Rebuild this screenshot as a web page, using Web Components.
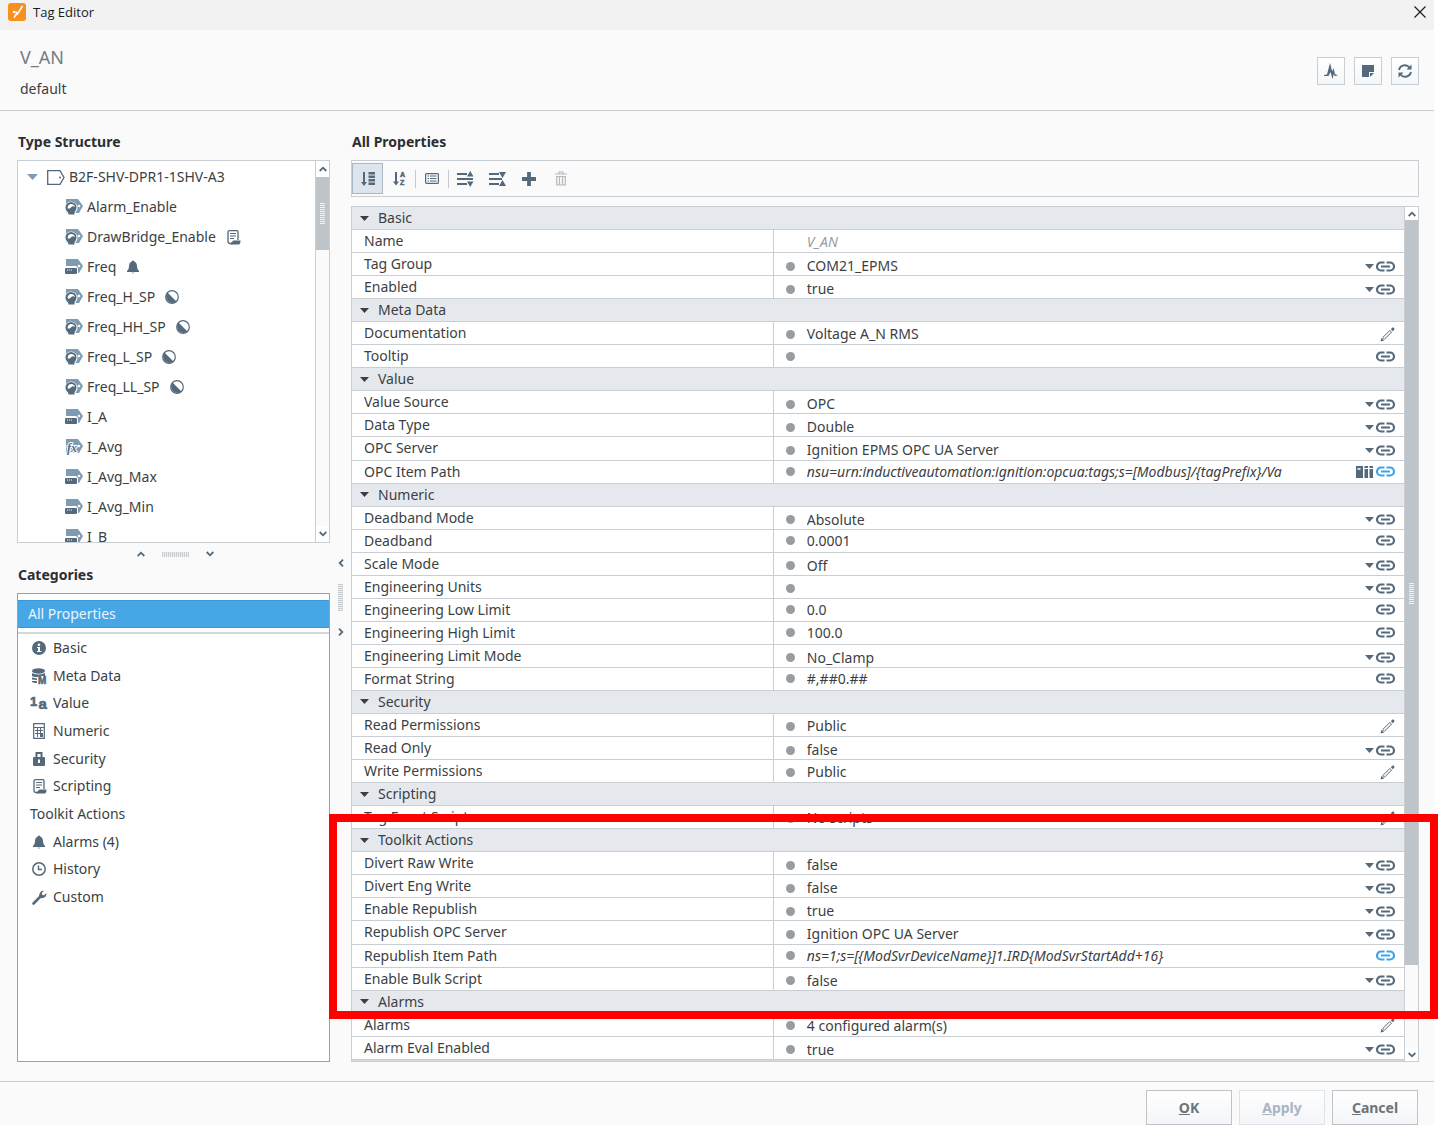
<!DOCTYPE html>
<html lang="en">
<head>
    <meta charset="UTF-8">
    <meta name="viewport" content="width=device-width, initial-scale=1.0">
    <title>Tag Editor</title>
    <style>
        body {
            margin: 0;
            background-color: #fff;
            font-family: "Noto Sans", "Open Sans", sans-serif;
            font-size: 14px;
            line-height: 20px;
            color: #3b3f44;
            --line: #c9ced4;
            --ink: #54697b;
            --accent: #47a6e6;
        }
    </style>
</head>
<body>

    <tag-editor>
        <span slot="title">Tag Editor</span>
        <span slot="name">V_AN</span>
        <span slot="provider">default</span>

        <side-panel slot="side">
            <span slot="tree-title">Type Structure</span>
            <tree-item slot="tree" icon="tagOutline" root>B2F-SHV-DPR1-1SHV-A3</tree-item>
            <tree-item slot="tree" icon="tagMemory">Alarm_Enable</tree-item>
            <tree-item slot="tree" icon="tagMemory" badge="script">DrawBridge_Enable</tree-item>
            <tree-item slot="tree" icon="tagOpc" badge="bell">Freq</tree-item>
            <tree-item slot="tree" icon="tagMemory" badge="half">Freq_H_SP</tree-item>
            <tree-item slot="tree" icon="tagMemory" badge="half">Freq_HH_SP</tree-item>
            <tree-item slot="tree" icon="tagMemory" badge="half">Freq_L_SP</tree-item>
            <tree-item slot="tree" icon="tagMemory" badge="half">Freq_LL_SP</tree-item>
            <tree-item slot="tree" icon="tagOpc">I_A</tree-item>
            <tree-item slot="tree" icon="tagExpr">I_Avg</tree-item>
            <tree-item slot="tree" icon="tagOpc">I_Avg_Max</tree-item>
            <tree-item slot="tree" icon="tagOpc">I_Avg_Min</tree-item>
            <tree-item slot="tree" icon="tagOpc">I_B</tree-item>

            <span slot="category-title">Categories</span>
            <category-item slot="all" selected>All Properties</category-item>
            <category-item slot="category" icon="info">Basic</category-item>
            <category-item slot="category" icon="meta">Meta Data</category-item>
            <category-item slot="category" icon="value">Value</category-item>
            <category-item slot="category" icon="calc">Numeric</category-item>
            <category-item slot="category" icon="lock">Security</category-item>
            <category-item slot="category" icon="script">Scripting</category-item>
            <category-item slot="category">Toolkit Actions</category-item>
            <category-item slot="category" icon="bell">Alarms (4)</category-item>
            <category-item slot="category" icon="clock">History</category-item>
            <category-item slot="category" icon="wrench">Custom</category-item>
        </side-panel>

        <span slot="main-title">All Properties</span>
        <property-toolbar slot="main"></property-toolbar>
        <property-table slot="main"></property-table>
    </tag-editor>

    <template id="tag-editor-template">
        <style>
            :host {
                display: grid;
                grid-template-rows: 30px 81px minmax(0, 1fr) auto;
                position: relative;
                height: 100vh;
                box-sizing: border-box;
                border-right: 4px solid #fff;
                background: #fafafa;
            }
            .titlebar {
                display: flex;
                align-items: flex-start;
                gap: 7px;
                padding: 3px 8px;
                background: #f2f2f2;
                font-family: "Open Sans", sans-serif;
                font-size: 13px;
                line-height: 18px;
                color: #1b1b1b;
            }
            .titlebar button {
                margin-left: auto;
                padding: 3px 0;
                border: 0;
                background: none;
                line-height: 0;
                color: #222;
            }
            header {
                display: flex;
                justify-content: space-between;
                align-items: flex-start;
                padding: 15px 15px 0 20px;
                border-bottom: 1px solid var(--line);
            }
            h1 {
                margin: 0 0 12px;
                font-size: 18px;
                font-weight: normal;
                line-height: 24px;
                color: #777c82;
            }
            .provider {
                line-height: 16px;
            }
            .actions {
                display: flex;
                gap: 9px;
                padding-top: 12px;
            }
            .actions button {
                display: grid;
                place-items: center;
                width: 28px;
                height: 28px;
                padding: 0;
                border: 1px solid var(--line);
                background: linear-gradient(#fff, #f3f6f9);
                color: var(--ink);
            }
            .body {
                display: grid;
                grid-template-columns: 313px 21px minmax(0, 1fr);
                padding: 21px 15px 19px 17px;
            }
            .main {
                display: flex;
                flex-direction: column;
            }
            h2 {
                margin: 0 0 8px;
                padding-left: 1px;
                font-size: 14px;
                line-height: 20px;
                color: #2b2e33;
            }
            .splitter {
                display: flex;
                flex-direction: column;
                align-items: center;
                justify-content: center;
                gap: 17px;
                color: var(--ink);
            }
            .grip {
                width: 5px;
                height: 27px;
                background: repeating-linear-gradient(#c8cdd2 0 1px, #eceef0 1px 2px);
            }
            footer {
                display: flex;
                justify-content: flex-end;
                gap: 7px;
                padding: 8px 16px 0;
                border-top: 1px solid var(--line);
            }
            footer button {
                width: 86px;
                height: 35px;
                border: 1px solid #bfc3c8;
                background: linear-gradient(#fff, #f3f5f8);
                font: inherit;
                font-weight: bold;
                color: #6d737a;
            }
            footer button:disabled {
                border-color: #dfe3e8;
                color: #a9b5c3;
            }
            /* red frame round the toolkit rows */
            .highlight {
                position: absolute;
                top: 814px;
                left: 329px;
                right: -4px;
                height: 205px;
                box-sizing: border-box;
                border: 8px solid #f00;
                pointer-events: none;
            }
        </style>
        <div class="titlebar">
            <ui-icon name="logo"></ui-icon>
            <slot name="title"></slot>
            <button aria-label="Close"><ui-icon name="close"></ui-icon></button>
        </div>
        <header>
            <div>
                <h1><slot name="name"></slot></h1>
                <div class="provider"><slot name="provider"></slot></div>
            </div>
            <div class="actions">
                <button aria-label="Diagnostics"><ui-icon name="pulse"></ui-icon></button>
                <button aria-label="Notes"><ui-icon name="note"></ui-icon></button>
                <button aria-label="Refresh"><ui-icon name="refresh"></ui-icon></button>
            </div>
        </header>
        <div class="body">
            <slot name="side"></slot>
            <div class="splitter">
                <ui-icon name="left"></ui-icon>
                <div class="grip"></div>
                <ui-icon name="right"></ui-icon>
            </div>
            <div class="main">
                <h2><slot name="main-title"></slot></h2>
                <slot name="main"></slot>
            </div>
        </div>
        <footer>
            <button><u>O</u>K</button>
            <button disabled><u>A</u>pply</button>
            <button><u>C</u>ancel</button>
        </footer>
        <div class="highlight"></div>
    </template>

    <template id="side-panel-template">
        <style>
            :host {
                display: flex;
                flex-direction: column;
                min-height: 0;
            }
            h2 {
                margin: 0 0 8px;
                padding-left: 1px;
                font-size: 14px;
                line-height: 20px;
                color: #2b2e33;
            }
            .tree {
                display: flex;
                flex: 381 1 0;
                min-height: 0;
                box-sizing: border-box;
                border: 1px solid var(--line);
                background: #fff;
            }
            .items {
                flex: 1;
                padding-top: 1px;
                overflow: hidden;
            }
            .splitter {
                display: flex;
                align-items: center;
                justify-content: center;
                gap: 17px;
                height: 22px;
                padding-left: 4px;
                color: var(--ink);
            }
            .grip {
                width: 27px;
                height: 5px;
                background: repeating-linear-gradient(90deg, #c8cdd2 0 1px, #eceef0 1px 2px);
            }
            .categories {
                flex: 461 1 0;
                box-sizing: border-box;
                padding-top: 6px;
                border: 1px solid #5db3ec;
                background: #fff;
            }
            .list {
                display: grid;
                grid-auto-rows: 1fr;
                height: 277px;
                margin-top: 4px;
                border-top: 2px solid #d3d7db;
            }
        </style>
        <h2><slot name="tree-title"></slot></h2>
        <div class="tree">
            <div class="items"><slot name="tree"></slot></div>
            <scroll-bar style="--arrow: 16px; --thumb: 21%; --grip-top: 26px"></scroll-bar>
        </div>
        <div class="splitter">
            <ui-icon name="up"></ui-icon>
            <div class="grip"></div>
            <ui-icon name="down"></ui-icon>
        </div>
        <h2><slot name="category-title"></slot></h2>
        <div class="categories">
            <slot name="all"></slot>
            <div class="list"><slot name="category"></slot></div>
        </div>
    </template>

    <template id="tree-item-template">
        <style>
            :host {
                display: flex;
                align-items: center;
                gap: 4px;
                height: 30px;
                padding-left: 47px;
                white-space: nowrap;
            }
            :host([root]) {
                padding-left: 9px;
            }
            .caret {
                margin-right: 5px;
                color: #7f9cb4;
            }
            .badge {
                margin-left: 6px;
            }
            ui-icon {
                color: var(--ink);
            }
        </style>
        <slot></slot>
    </template>

    <template id="category-item-template">
        <style>
            :host {
                display: block;
            }
            button {
                display: flex;
                align-items: center;
                gap: 5px;
                width: 100%;
                height: 100%;
                padding: 0 0 0 12px;
                border: 0;
                background: none;
                font: inherit;
                color: inherit;
                text-align: left;
            }
            :host([selected]) button {
                height: 28px;
                padding-left: 10px;
                border: solid #3a98d8;
                border-width: 1px 0;
                background: var(--accent);
                color: #eaf5fd;
            }
            .icon {
                display: grid;
                justify-items: center;
                width: 18px;
                color: var(--ink);
            }
        </style>
        <button><slot></slot></button>
    </template>

    <template id="scroll-bar-template">
        <style>
            :host {
                display: flex;
                flex-direction: column;
                width: 13px;
                flex: none;
                border-left: 1px solid var(--line);
                background: #fafafa;
            }
            button {
                display: grid;
                place-items: center;
                width: 100%;
                height: var(--arrow);
                padding: 0;
                border: 0;
                background: #fff;
                color: var(--ink);
            }
            .track {
                flex: 1;
                min-height: 0;
            }
            .thumb {
                height: var(--thumb);
                box-sizing: border-box;
                padding: var(--grip-top) 4px 0;
                background: #bec4c8;
            }
            .grip {
                height: 21px;
                background: repeating-linear-gradient(#f1f3f4 0 1px, #bec4c8 1px 2px);
            }
        </style>
        <button aria-label="Scroll up"><ui-icon name="up"></ui-icon></button>
        <div class="track"><div class="thumb"><div class="grip"></div></div></div>
        <button aria-label="Scroll down"><ui-icon name="down"></ui-icon></button>
    </template>

    <template id="property-toolbar-template">
        <style>
            :host {
                display: flex;
                align-items: center;
                height: 35px;
                margin-bottom: 9px;
                border: 1px solid var(--line);
            }
            button {
                display: grid;
                place-items: center;
                width: 32px;
                height: 31px;
                padding: 0;
                border: 0;
                background: none;
                color: var(--ink);
            }
            button[aria-pressed="true"] {
                width: 31px;
                border: 1px solid #a9b8c5;
                background: #dde4eb;
            }
            button:disabled {
                color: #b3b9bf;
            }
            i {
                width: 1px;
                height: 18px;
                background: #c3c9ce;
            }
        </style>
        <button aria-label="Group by category" aria-pressed="true"><ui-icon name="sortList"></ui-icon></button>
        <button aria-label="Sort by name"><ui-icon name="sortAz"></ui-icon></button>
        <i></i>
        <button aria-label="Show description"><ui-icon name="details"></ui-icon></button>
        <i></i>
        <button aria-label="Expand all"><ui-icon name="expand"></ui-icon></button>
        <button aria-label="Collapse all"><ui-icon name="collapse"></ui-icon></button>
        <button aria-label="Add property"><ui-icon name="plus"></ui-icon></button>
        <button aria-label="Delete property" disabled><ui-icon name="trash"></ui-icon></button>
    </template>

    <template id="property-table-template">
        <style>
            :host {
                display: flex;
                flex: 1;
                min-height: 0;
                border: 1px solid var(--line);
                background: #d6dade;
            }
            .wrap {
                flex: 1;
                display: grid;
                padding-bottom: 1px;
            }
            table {
                width: 100%;
                height: 100%;
                table-layout: fixed;
                border-spacing: 0;
                background: #fff;
            }
            .name-column {
                width: 40%;
            }
            tr {
                height: 23px;
            }
            td, th {
                padding: 0;
                border-bottom: 1px solid var(--line);
                font-weight: normal;
                text-align: left;
                line-height: 20px;
                vertical-align: top;
            }
            .name {
                padding: 1px 0 0 12px;
            }
            .group {
                padding: 1px 0 0 8px;
                background: #e5e9ee;
            }
            .group button {
                display: flex;
                align-items: center;
                gap: 9px;
                padding: 0;
                border: 0;
                background: none;
                font: inherit;
                line-height: 20px;
                color: inherit;
            }
            .value {
                border-left: 1px solid var(--line);
            }
            .cell {
                display: flex;
                align-items: center;
                height: 22px;
                padding: 0 9px 0 12px;
            }
            .cell.edit, .cell.fixed {
                height: 20px;
                padding-top: 2px;
            }
            .cell.choice {
                height: 18px;
                padding-top: 4px;
            }
            .cell::before {
                content: "";
                flex: none;
                width: 9px;
                height: 9px;
                margin-right: 12px;
                border-radius: 50%;
                background: #989da1;
            }
            .cell.fixed::before {
                background: none;
            }
            .cell > span, input, select {
                flex: 1;
                min-width: 0;
                height: 20px;
                padding: 0;
                border: 0;
                background: none;
                font: inherit;
                line-height: 20px;
                color: inherit;
                appearance: none;
                outline: 0;
            }
            .italic > span, .italic input {
                font-style: italic;
            }
            .fixed input {
                color: #999da1;
            }
            .caret {
                margin-right: 2px;
            }
            .cell ui-icon {
                color: var(--ink);
            }
            .cell button {
                padding: 0;
                border: 0;
                background: none;
                line-height: 0;
            }
            .browse {
                margin-right: 3px;
            }
            .bound button ui-icon {
                color: #3ba3ea;
            }
        </style>
        <div class="wrap">
            <table>
                <colgroup><col class="name-column"><col></colgroup>
                <tbody></tbody>
            </table>
        </div>
        <scroll-bar style="--arrow: 13px; --thumb: 90%; --grip-top: 363px"></scroll-bar>
    </template>

    <script>
        // [width, height, svg body]; every icon paints with currentColor
        const TAG = '<path d="M1 0H13L18 7L14 14H1Z" fill="#7f9ab1"/><circle cx="14" cy="7" r="1.3" fill="#fff"/>';
        const ICONS = {
            logo: [18, 18, '<rect width="18" height="18" rx="3" fill="#f7901e"/><path d="M14.5 3L9.5 11L7.500 8.500" fill="none" stroke="#fff" stroke-width="1.5"/><circle cx="6" cy="9" r="1.2" fill="#fff"/><path d="M9.5 10.5L6 15L7.5 11Z" fill="#fff" stroke="#fff"/>'],
            close: [12, 12, '<path d="M.5 .5L11.5 11.5M11.5 .5L.5 11.5" stroke="currentColor" stroke-width="1.3"/>'],
            pulse: [14, 16, '<path d="M0 12L3 11.500L6 0L8.200 8.500L9.500 5L11 11L14 12.500L10.500 13L10 10.500L8.500 16L6.500 9L4.500 13H0Z" fill="currentColor"/>'],
            note: [12, 12, '<path d="M0 0H12V7H7V12H0Z" fill="currentColor"/><path d="M8 8H12L8 12Z" fill="currentColor"/>'],
            refresh: [14, 14, '<path d="M1 6A6 6 0 0 1 11.500 3.500M13 8A6 6 0 0 1 2.500 10.500" fill="none" stroke="currentColor" stroke-width="1.8"/><path d="M13.500 .5V5.500H8.500ZM.5 13.500V8.500H5.500Z" fill="currentColor"/>'],
            up: [8, 6, '<path d="M.7 5L4 1.700L7.300 5" fill="none" stroke="currentColor" stroke-width="1.8"/>'],
            down: [8, 6, '<path d="M.7 1L4 4.300L7.300 1" fill="none" stroke="currentColor" stroke-width="1.8"/>'],
            left: [6, 8, '<path d="M5 .7L1.700 4L5 7.300" fill="none" stroke="currentColor" stroke-width="1.8"/>'],
            right: [6, 8, '<path d="M1 .7L4.300 4L1 7.300" fill="none" stroke="currentColor" stroke-width="1.8"/>'],
            treeCaret: [11, 6, '<path d="M0 0H11L5.500 6Z" fill="currentColor"/>'],
            caret: [9, 5, '<path d="M0 0H9L4.500 5Z" fill="currentColor"/>'],
            tagOutline: [18, 15, '<path d="M.7 .7H13L17 7.500L13 14.300H.7Z" fill="#fff" stroke="currentColor" stroke-width="1.3"/><circle cx="13" cy="7.5" r="1" fill="currentColor"/>'],
            tagMemory: [18, 16, TAG + '<circle cx="6" cy="9" r="6.5" fill="#fff"/><circle cx="6" cy="8.500" r="5.500" fill="currentColor"/><path d="M2.500 11H9.500V15.500H3.500Z" fill="currentColor"/><path d="M2.500 9Q3 4.500 7 5Q9.500 5.500 10 8Q7.500 6.500 6 8.500Q4 10.500 2.500 9Z" fill="#fff"/>'],
            tagOpc: [18, 16, TAG + '<path d="M0 7H11L13 9V15H0Z" fill="#fff"/><rect y="9" width="12" height="6" rx="1" fill="currentColor"/><path d="M2 11H3M4 11H5M6 11H7" stroke="#fff"/>'],
            tagExpr: [18, 16, TAG + '<text x="2" y="13" font-family="Liberation Serif" font-style="italic" font-weight="bold" font-size="12" fill="currentColor" stroke="#fff" stroke-width="2" paint-order="stroke">fx</text>'],
            script: [15, 15, '<path d="M2 11V2Q2 .7 3.500 .7H11Q12 .7 12 2V10M2 11Q2 13.500 4 13.500H7" fill="none" stroke="currentColor" stroke-width="1.3"/><path d="M4 3.500H10M4 6H10M4 8.500H8" stroke="currentColor" stroke-width="1.2"/><path d="M5.500 12Q6 13 7 10.500H14.500Q14.500 14.500 12.500 14.500H4.500Z" fill="currentColor"/>'],
            bell: [14, 14, '<path d="M7 .5Q8 .5 8.200 1.500Q11 2.500 11 6.500Q11 9.500 13 11V12H1V11Q3 9.500 3 6.500Q3 2.500 5.800 1.500Q6 .5 7 .5Z" fill="currentColor"/><path d="M5.500 12.500H8.500L7 14Z" fill="currentColor" opacity=".6"/>'],
            half: [14, 14, '<circle cx="7" cy="7" r="6.3" fill="#fff" stroke="currentColor" stroke-width="1.2"/><path d="M2.500 2.500L11.500 11.500A6.400 6.400 0 0 1 2.500 2.500Z" fill="currentColor"/>'],
            info: [14, 14, '<circle cx="7" cy="7" r="7" fill="currentColor"/><path d="M5 6H8V10H9.500V11H5V10H6V7H5Z" fill="#fff"/><circle cx="7" cy="3.7" r="1.3" fill="#fff"/>'],
            meta: [16, 16, '<ellipse cx="7.500" cy="3" rx="6.500" ry="2.700" fill="currentColor"/><path d="M1 5Q7 8 14 5V8H7V9H5Q2 9 1 8ZM1 9.500L6 10.500V12L1 11.500ZM1 13H6V15Q2 15 1 14Z" fill="currentColor"/><text x="7" y="15.5" font-family="Liberation Sans" font-size="10" font-weight="bold" fill="currentColor" stroke="currentColor" stroke-width=".6">M</text>'],
            value: [18, 16, '<g font-family="Liberation Sans" font-weight="bold" fill="currentColor" stroke="currentColor" stroke-width=".6"><text x="0" y="11" font-size="13">1</text><text x="8.5" y="14" font-size="15">a</text></g>'],
            calc: [12, 16, '<path d="M.7 .7H11.300V15.300H.7ZM1 4.500H11" fill="none" stroke="currentColor" stroke-width="1.2"/><path d="M2 7.500H10M2 10.500H10M4.500 5V14M7.500 5V14" stroke="currentColor"/><path d="M8 11H10V14H8Z" fill="currentColor"/>'],
            lock: [12, 14, '<path d="M3.500 6V1H8.500V6" fill="none" stroke="currentColor" stroke-width="2"/><rect y="5" width="12" height="9" rx="1" fill="currentColor"/><path d="M5 7.500H7V11H5Z" fill="#fff"/>'],
            clock: [14, 14, '<circle cx="7" cy="7" r="6.2" fill="none" stroke="currentColor" stroke-width="1.5"/><path d="M6.500 3.500V7.500H10" fill="none" stroke="currentColor" stroke-width="1.4"/>'],
            wrench: [15, 15, '<path d="M1.500 13.500L8.500 6.500" stroke="currentColor" stroke-width="2.6" stroke-linecap="round"/><path d="M12 .8L9.800 3L10.300 5L12.200 5.300L14.200 3Q15 7 11 8Q9 8.500 7.500 7Q6.500 4.500 8.500 2Q10 .2 12 .8Z" fill="currentColor"/>'],
            sortList: [14, 14, '<path d="M3 0V11" stroke="currentColor" stroke-width="2"/><path d="M0 10H6L3 14ZM7.500 0H14V2.500H7.500ZM7.500 3.500H14V6H7.500ZM7.500 7H14V9.500H7.500ZM7.500 10.500H14V13H7.500Z" fill="currentColor"/>'],
            sortAz: [12, 15, '<path d="M3 1V12" stroke="currentColor" stroke-width="2"/><path d="M0 10.500H6L3 14.500Z" fill="currentColor"/><g font-family="Liberation Sans" font-size="7" font-weight="bold" fill="currentColor" stroke="currentColor" stroke-width=".5"><text x="7" y="6">A</text><text x="7" y="14">Z</text></g>'],
            details: [14, 11, '<rect x=".6" y=".6" width="12.8" height="9.8" rx="1" fill="none" stroke="currentColor" stroke-width="1.2"/><path d="M2.500 3H4M5 3H11.500M2.500 5.500H4M5 5.500H11.500M2.500 8H4M5 8H11.500" stroke="currentColor" stroke-width="1.1"/>'],
            expand: [17, 16, '<path d="M0 3H10M0 8H16M0 13H10" stroke="currentColor" stroke-width="2.2"/><path d="M10 5.500H16.500L13.200 0ZM10 10.500H16.500L13.200 16Z" fill="currentColor"/>'],
            collapse: [17, 14, '<path d="M0 2H10M0 7H13M0 12H10" stroke="currentColor" stroke-width="2.2"/><path d="M10 0H17L13.500 6ZM10 14H17L13.500 8Z" fill="currentColor"/>'],
            plus: [14, 14, '<path d="M7 0V14M0 7H14" stroke="currentColor" stroke-width="3.8"/>'],
            trash: [12, 15, '<path d="M0 3H12M4 2.500V1H8V2.500M1 5.500H11M1.700 6V14H10.300V6M4.500 6V14M7.500 6V14" fill="none" stroke="currentColor" stroke-width="1.2"/>'],
            link: [19, 11, '<path d="M8.500 1.500H5A4 4 0 0 0 5 9.500H8.500M10.500 1.500H14A4 4 0 0 1 14 9.500H10.500" fill="none" stroke="currentColor" stroke-width="2.2"/><path d="M5 5.500H14" stroke="currentColor" stroke-width="2"/>'],
            pencil: [15, 15, '<path d="M.5 14.500L1.500 10.800L4.200 13.500ZM10.800 2.200L12.500 .6Q14.800 .2 14.400 2.500L12.800 4.200Z" fill="currentColor"/><path d="M2.800 10.500L9.800 3.500L11.500 5.200L4.500 12.200Z" fill="none" stroke="currentColor"/>'],
            browse: [17, 12, '<path d="M0 0H7V12H0ZM8.500 0H12V2H8.500ZM8.500 3H12V12H8.500ZM13.500 0H17V2H13.500ZM13.500 3H17V12H13.500Z" fill="currentColor"/><path d="M1.500 3H4.500" stroke="#fff" stroke-width="1.5"/>']
        };

        // kind: choice = drop-down, text = text box, edit = opens its own editor
        const PROPERTIES = [
            ['Basic'],
            ['Name', 'V_AN', 'fixed italic'],
            ['Tag Group', 'COM21_EPMS', 'choice'],
            ['Enabled', 'true', 'choice'],
            ['Meta Data'],
            ['Documentation', 'Voltage A_N RMS', 'edit'],
            ['Tooltip', '', 'text'],
            ['Value'],
            ['Value Source', 'OPC', 'choice'],
            ['Data Type', 'Double', 'choice'],
            ['OPC Server', 'Ignition EPMS OPC UA Server', 'choice'],
            ['OPC Item Path', 'nsu=urn:inductiveautomation:ignition:opcua:tags;s=[Modbus]/{tagPrefix}/Va', 'text italic bound browsable'],
            ['Numeric'],
            ['Deadband Mode', 'Absolute', 'choice'],
            ['Deadband', '0.0001', 'text'],
            ['Scale Mode', 'Off', 'choice'],
            ['Engineering Units', '', 'choice'],
            ['Engineering Low Limit', '0.0', 'text'],
            ['Engineering High Limit', '100.0', 'text'],
            ['Engineering Limit Mode', 'No_Clamp', 'choice'],
            ['Format String', '#,##0.##', 'text'],
            ['Security'],
            ['Read Permissions', 'Public', 'edit'],
            ['Read Only', 'false', 'choice'],
            ['Write Permissions', 'Public', 'edit'],
            ['Scripting'],
            ['Tag Event Scripts', 'No scripts', 'edit'],
            ['Toolkit Actions'],
            ['Divert Raw Write', 'false', 'choice'],
            ['Divert Eng Write', 'false', 'choice'],
            ['Enable Republish', 'true', 'choice'],
            ['Republish OPC Server', 'Ignition OPC UA Server', 'choice'],
            ['Republish Item Path', 'ns=1;s=[{ModSvrDeviceName}]1.IRD{ModSvrStartAdd+16}', 'text italic bound'],
            ['Enable Bulk Script', 'false', 'choice'],
            ['Alarms'],
            ['Alarms', '4 configured alarm(s)', 'edit'],
            ['Alarm Eval Enabled', 'true', 'choice']
        ];

        class TemplateElement extends HTMLElement {
            constructor() {
                super();
                const template = document.getElementById(this.localName + '-template');
                this.attachShadow({ mode: 'open' }).appendChild(template.content.cloneNode(true));
            }
        }

        class UiIcon extends HTMLElement {
            connectedCallback() {
                if (this.shadowRoot) return;
                const [w, h, body] = ICONS[this.getAttribute('name')];
                this.attachShadow({ mode: 'open' }).innerHTML = `
                    <style>
                        :host { display: inline-block; flex: none; line-height: 0; }
                        svg { display: block; overflow: visible; }
                    </style>
                    <svg width="${w}" height="${h}" viewBox="0 0 ${w} ${h}" aria-hidden="true">${body}</svg>`;
            }
        }

        class TreeItem extends TemplateElement {
            connectedCallback() {
                const slot = this.shadowRoot.querySelector('slot');
                if (this.hasAttribute('root')) {
                    slot.insertAdjacentHTML('beforebegin', '<ui-icon class="caret" name="treeCaret"></ui-icon>');
                }
                slot.insertAdjacentHTML('beforebegin', `<ui-icon name="${this.getAttribute('icon')}"></ui-icon>`);
                if (this.hasAttribute('badge')) {
                    slot.insertAdjacentHTML('afterend', `<ui-icon class="badge" name="${this.getAttribute('badge')}"></ui-icon>`);
                }
            }
        }

        class CategoryItem extends TemplateElement {
            connectedCallback() {
                const icon = this.getAttribute('icon');
                if (icon) {
                    this.shadowRoot.querySelector('slot').insertAdjacentHTML('beforebegin',
                        `<span class="icon"><ui-icon name="${icon}"></ui-icon></span>`);
                }
            }
        }

        class PropertyTable extends TemplateElement {
            connectedCallback() {
                this.shadowRoot.querySelector('tbody').innerHTML = PROPERTIES.map((p, i) => this.row(p, i)).join('');
            }

            row([label, value, kind], i) {
                if (!kind) {
                    return `<tr><th class="group" colspan="2"><button><ui-icon name="caret"></ui-icon>${label}</button></th></tr>`;
                }
                // rows with their own editor have no field for a label to point at
                const name = kind === 'edit' ? label : `<label for="p${i}">${label}</label>`;
                return `<tr><th class="name">${name}</th>
                    <td class="value"><div class="cell ${kind}">${this.editor(label, value, kind, i)}</div></td></tr>`;
            }

            editor(label, value, kind, i) {
                const link = `<button aria-label="Bind ${label}"><ui-icon name="link"></ui-icon></button>`;
                if (kind === 'choice') {
                    return `<select id="p${i}"><option>${value}</option></select>
                        <ui-icon class="caret" name="caret"></ui-icon>${link}`;
                }
                if (kind === 'edit') {
                    return `<span>${value}</span><button aria-label="Edit ${label}"><ui-icon name="pencil"></ui-icon></button>`;
                }
                if (kind.includes('fixed')) {
                    return `<input id="p${i}" value="${value}" readonly>`;
                }
                const browse = kind.includes('browsable') ? '<ui-icon class="browse" name="browse"></ui-icon>' : '';
                return `<input id="p${i}" value="${value}">${browse}${link}`;
            }
        }

        customElements.define('ui-icon', UiIcon);
        customElements.define('scroll-bar', class extends TemplateElement {});
        customElements.define('tree-item', TreeItem);
        customElements.define('category-item', CategoryItem);
        customElements.define('side-panel', class extends TemplateElement {});
        customElements.define('property-toolbar', class extends TemplateElement {});
        customElements.define('property-table', PropertyTable);
        customElements.define('tag-editor', class extends TemplateElement {});
    </script>

</body>
</html>
